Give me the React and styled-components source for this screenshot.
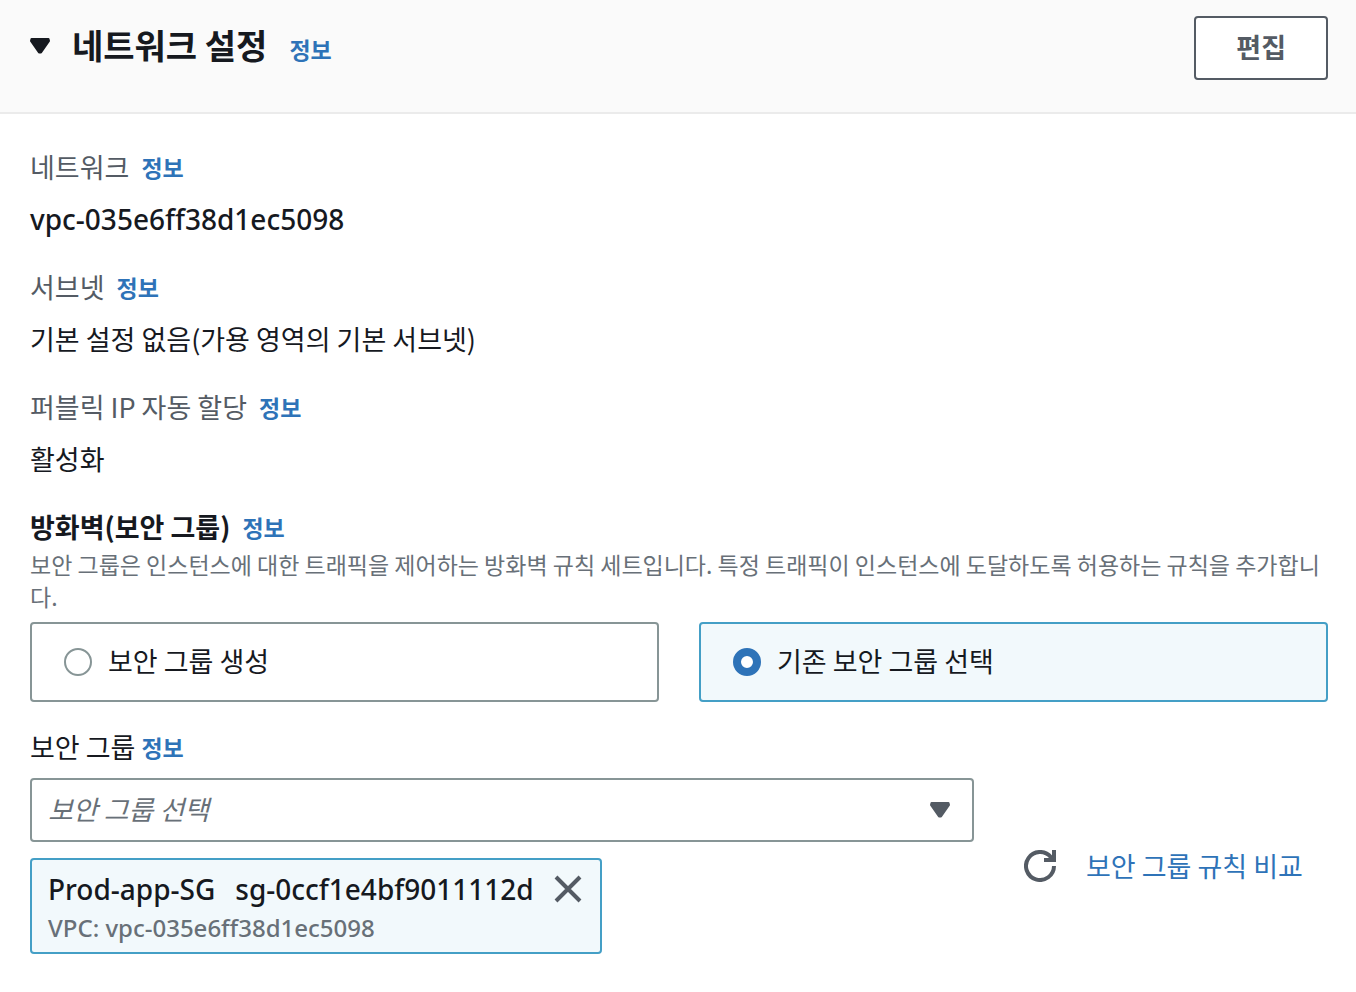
import React, { useState } from "react";
import styled, { createGlobalStyle } from "styled-components";

const GlobalStyle = createGlobalStyle`
  *, *::before, *::after { box-sizing: border-box; }
  body {
    margin: 0;
    background: #ffffff;
    color: #16191f;
    font-family: "Noto Sans CJK KR", "Noto Sans", sans-serif;
    font-size: 27px;
    line-height: 40px;
  }
`;

const latin = `"Noto Sans", "Noto Sans CJK KR", sans-serif`;

const Header = styled.header`
  display: flex;
  justify-content: space-between;
  align-items: flex-start;
  padding: 16px 28px 32px 30px;
  background: #fafafa;
  border-bottom: 2px solid #ebebeb;
`;

const HeadingRow = styled.div`
  display: flex;
  align-items: baseline;
  gap: 22px;
`;

const Title = styled.h2`
  margin: 0;
  font-size: 34px;
  line-height: 58px;
  font-weight: 700;
`;

const Toggle = styled.button`
  display: flex;
  align-items: center;
  gap: 22px;
  min-height: 60px;
  padding: 0;
  border: 0;
  background: none;
  color: inherit;
  font: inherit;
  cursor: pointer;
`;

const ToggleText = styled.span`
  align-self: baseline;
`;

const EditButton = styled.button`
  height: 64px;
  padding: 0 40px 2px;
  border: 2px solid #545b64;
  border-radius: 4px;
  background: #ffffff;
  color: #545b64;
  font: inherit;
  font-weight: 700;
  cursor: pointer;
`;

const InfoLink = styled.a`
  color: #2e73b8;
  font-size: 23px;
  font-weight: 700;
  text-decoration: none;
`;

const Body = styled.div`
  padding: 33px 28px 38px 30px;
`;

const Details = styled.dl`
  display: flex;
  flex-direction: column;
  gap: 28px;
  margin: 0 0 28px;
`;

const Detail = styled.div`
  display: flex;
  flex-direction: column;
  gap: 12px;
`;

const Term = styled.dt`
  display: flex;
  align-items: center;
  gap: 12px;
  height: 40px;
  color: #545b64;
`;

const Value = styled.dd`
  margin: 0;
  height: 40px;
  font-family: ${(p) => (p.$latin ? latin : "inherit")};
  font-size: ${(p) => (p.$latin ? "28px" : "27px")};
  font-weight: ${(p) => (p.$latin ? 500 : 400)};
`;

const Fieldset = styled.section`
  margin-bottom: 25px;
`;

const FieldLabel = styled.div`
  display: flex;
  align-items: center;
  gap: ${(p) => (p.$tight ? "6px" : "12px")};
  height: 40px;
  margin-bottom: ${(p) => (p.$tight ? "11px" : "1px")};
  font-weight: ${(p) => (p.$tight ? 400 : 700)};
`;

const Description = styled.p`
  margin: 0 0 10px;
  color: #687078;
  font-size: 23px;
  line-height: 32px;
`;

const Tiles = styled.div`
  display: grid;
  grid-template-columns: 1fr 1fr;
  gap: 40px;
`;

const Tile = styled.label`
  display: flex;
  align-items: center;
  gap: 16px;
  height: 80px;
  padding: 0 32px 2px;
  border: 2px solid ${(p) => (p.$selected ? "#449fc6" : "#879596")};
  border-radius: 4px;
  background: ${(p) => (p.$selected ? "#f2f9fc" : "#ffffff")};
  cursor: pointer;
`;

const Radio = styled.input`
  appearance: none;
  flex: none;
  width: 28px;
  height: 28px;
  margin: 2px 0 0;
  border: 2px solid #879596;
  border-radius: 50%;
  background: #ffffff;
  &:checked {
    border: 8px solid #2e73b8;
  }
`;

const GroupRow = styled.div`
  display: grid;
  grid-template-columns: minmax(0, 1fr) 304px;
  column-gap: 50px;
  align-items: center;
`;

const Picker = styled.div`
  display: flex;
  flex-direction: column;
  align-items: flex-start;
  gap: 16px;
`;

const SelectWrap = styled.div`
  display: grid;
  align-items: center;
  width: 100%;
  & > * { grid-area: 1 / 1; }
  & > svg {
    justify-self: end;
    margin-right: 24px;
    pointer-events: none;
  }
`;

const Select = styled.select`
  appearance: none;
  width: 100%;
  height: 64px;
  padding: 0 60px 2px 16px;
  border: 2px solid #879596;
  border-radius: 4px;
  background: #ffffff;
  color: #687078;
  font: inherit;
  font-style: italic;
`;

const Token = styled.div`
  height: 96px;
  padding: 9px 18px 7px 16px;
  border: 2px solid #449fc6;
  border-radius: 4px;
  background: #f2f9fc;
  font-family: ${latin};
  font-weight: 500;
`;

const TokenMain = styled.div`
  display: flex;
  align-items: center;
  gap: 20px;
  height: 40px;
  font-size: 28px;
`;

const TokenNote = styled.div`
  color: #687078;
  font-size: 24px;
  line-height: 38px;
`;

const IconButton = styled.button`
  display: flex;
  padding: 0;
  border: 0;
  background: none;
  color: #545b64;
  cursor: pointer;
`;

const Actions = styled.div`
  display: flex;
  align-items: center;
  gap: 30px;
`;

const CompareLink = styled.a`
  color: #2e73b8;
  text-decoration: none;
  white-space: nowrap;
`;

const Caret = ({ color }) => (
  <svg width="20" height="16" viewBox="0 0 20 16" aria-hidden="true">
    <path d="M1.5 1H18.5L19 3L11 14.5H9L1 3Z" fill={color} stroke={color} strokeWidth="2" strokeLinejoin="round" />
  </svg>
);

const CloseIcon = () => (
  <svg width="28" height="28" viewBox="0 0 28 28" fill="none" stroke="currentColor" strokeWidth="4" aria-hidden="true">
    <path d="M2 2L26 26M26 2L2 26" />
  </svg>
);

const RefreshIcon = () => (
  <svg width="32" height="32" viewBox="0 0 32 32" fill="none" stroke="currentColor" strokeWidth="4" aria-hidden="true">
    <path d="M30 16A14 14 0 1 1 27 7.3L28.5 9.5" />
    <path d="M30 0V10H20" />
  </svg>
);

const Info = () => <InfoLink href="#info">정보</InfoLink>;

const details = [
  { term: "네트워크", value: "vpc-035e6ff38d1ec5098", latin: true },
  { term: "서브넷", value: "기본 설정 없음(가용 영역의 기본 서브넷)" },
  { term: "퍼블릭 IP 자동 할당", value: "활성화" },
];

const options = [
  { id: "create", label: "보안 그룹 생성" },
  { id: "existing", label: "기존 보안 그룹 선택" },
];

export default function App() {
  const [mode, setMode] = useState("existing");
  return (
    <main>
      <GlobalStyle />
      <Header>
        <HeadingRow>
          <Title>
            <Toggle type="button" aria-expanded="true">
              <Caret color="#16191f" />
              <ToggleText>네트워크 설정</ToggleText>
            </Toggle>
          </Title>
          <Info />
        </HeadingRow>
        <EditButton type="button">편집</EditButton>
      </Header>
      <Body>
        <Details>
          {details.map((d) => (
            <Detail key={d.term}>
              <Term>
                {d.term}
                <Info />
              </Term>
              <Value $latin={d.latin}>{d.value}</Value>
            </Detail>
          ))}
        </Details>
        <Fieldset role="radiogroup" aria-labelledby="firewall">
          <FieldLabel>
            <span id="firewall">방화벽(보안 그룹)</span>
            <Info />
          </FieldLabel>
          <Description>
            보안 그룹은 인스턴스에 대한 트래픽을 제어하는 방화벽 규칙 세트입니다. 특정 트래픽이 인스턴스에 도달하도록 허용하는 규칙을 추가합니다.
          </Description>
          <Tiles>
            {options.map((o) => (
              <Tile key={o.id} $selected={mode === o.id}>
                <Radio type="radio" name="firewall" checked={mode === o.id} onChange={() => setMode(o.id)} />
                {o.label}
              </Tile>
            ))}
          </Tiles>
        </Fieldset>
        <FieldLabel $tight>
          <label htmlFor="group">보안 그룹</label>
          <Info />
        </FieldLabel>
        <GroupRow>
          <Picker>
            <SelectWrap>
              <Select id="group" defaultValue="">
                <option value="">보안 그룹 선택</option>
              </Select>
              <Caret color="#545b64" />
            </SelectWrap>
            <Token>
              <TokenMain>
                <span>Prod-app-SG</span>
                <span>sg-0ccf1e4bf9011112d</span>
                <IconButton type="button" aria-label="제거">
                  <CloseIcon />
                </IconButton>
              </TokenMain>
              <TokenNote>VPC: vpc-035e6ff38d1ec5098</TokenNote>
            </Token>
          </Picker>
          <Actions>
            <IconButton type="button" aria-label="새로 고침">
              <RefreshIcon />
            </IconButton>
            <CompareLink href="#compare">보안 그룹 규칙 비교</CompareLink>
          </Actions>
        </GroupRow>
      </Body>
    </main>
  );
}
